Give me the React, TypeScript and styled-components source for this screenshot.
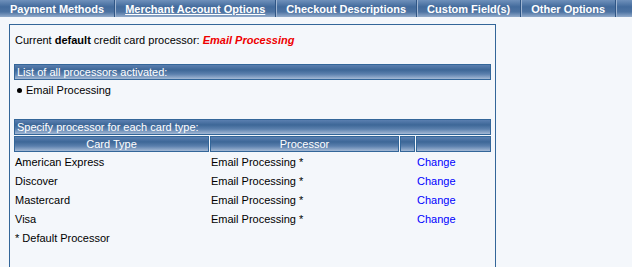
import React from "react";
import styled, { createGlobalStyle } from "styled-components";

const GlobalStyle = createGlobalStyle`
  html, body {
    margin: 0;
    padding: 0;
    background: #f4f7fb;
    font-family: "Liberation Sans", Arial, sans-serif;
    font-size: 11px;
    color: #000;
  }
`;

const barGradient = `linear-gradient(to bottom, #5a7fb0 0%, #3d6797 35%, #5b80ad 65%, #a4b9d5 100%)`;

const TabBar = styled.nav`
  display: flex;
  height: 17px;
  background: linear-gradient(to bottom, #6f90bb 0%, #436b9c 40%, #4d73a2 70%, #92abcb 100%);
`;

const Tab = styled.a<{ $active?: boolean }>`
  display: flex;
  align-items: center;
  padding: 0 10px;
  font-size: 11px;
  font-weight: bold;
  color: #fff;
  text-decoration: ${(p) => (p.$active ? "underline" : "none")};
  border-right: 1px solid #2f5585;
  box-shadow: 1px 0 0 #9fb5d2;
  white-space: nowrap;
  cursor: pointer;
`;

const Page = styled.main`
  padding: 7px 0 0 9px;
`;

const Box = styled.section`
  width: 477px;
  height: 260px;
  border: 1px solid #336699;
  padding: 0 4px;
`;

const Intro = styled.p`
  margin: 8px 0 0 1px;
  line-height: 14px;
`;

const Highlight = styled.span`
  color: #ee0000;
  font-weight: bold;
  font-style: italic;
`;

const SectionBar = styled.div<{ $top: number }>`
  margin-top: ${(p) => p.$top}px;
  height: 14px;
  line-height: 14px;
  border: 1px solid #336699;
  background: ${barGradient};
  color: #fff;
  padding-left: 2px;
`;

const BulletList = styled.ul`
  margin: 3px 0 0 0;
  padding: 0 0 0 12px;
  line-height: 14px;
  li {
    list-style: none;
    position: relative;
  }
  li::before {
    content: "";
    position: absolute;
    left: -9px;
    top: 5px;
    width: 5px;
    height: 5px;
    border-radius: 50%;
    background: #000;
  }
`;

const Grid = styled.div`
  display: grid;
  grid-template-columns: 195px 189px 15px 75px;
  column-gap: 1px;
  margin-top: 1px;
`;

const HeadCell = styled.div`
  box-sizing: border-box;
  height: 16px;
  line-height: 14px;
  border: 1px solid #336699;
  background: ${barGradient};
  color: #fff;
  text-align: center;
`;

const Cell = styled.div`
  height: 19px;
  line-height: 19px;
  padding-left: 1px;
  white-space: nowrap;
`;

const FirstRow = styled(Cell)`
  margin-top: 1px;
`;

const ChangeLink = styled.a`
  color: #0000ff;
  text-decoration: none;
  cursor: pointer;
`;

const Note = styled.div`
  line-height: 19px;
  padding-left: 1px;
`;

const tabs = [
  "Payment Methods",
  "Merchant Account Options",
  "Checkout Descriptions",
  "Custom Field(s)",
  "Other Options",
];

const cards = ["American Express", "Discover", "Mastercard", "Visa"];

export default function App() {
  return (
    <>
      <GlobalStyle />
      <TabBar>
        {tabs.map((t) => (
          <Tab key={t} $active={t === "Merchant Account Options"}>
            {t}
          </Tab>
        ))}
      </TabBar>
      <Page>
        <Box>
          <Intro>
            Current <b>default</b> credit card processor:{" "}
            <Highlight>Email Processing</Highlight>
          </Intro>
          <SectionBar $top={17}>List of all processors activated:</SectionBar>
          <BulletList>
            <li>Email Processing</li>
          </BulletList>
          <SectionBar $top={22}>Specify processor for each card type:</SectionBar>
          <Grid>
            <HeadCell>Card Type</HeadCell>
            <HeadCell>Processor</HeadCell>
            <HeadCell />
            <HeadCell />
            {cards.map((c, i) => {
              const Row = i === 0 ? FirstRow : Cell;
              return (
                <React.Fragment key={c}>
                  <Row>{c}</Row>
                  <Row>Email Processing *</Row>
                  <Row />
                  <Row>
                    <ChangeLink>Change</ChangeLink>
                  </Row>
                </React.Fragment>
              );
            })}
          </Grid>
          <Note>* Default Processor</Note>
        </Box>
      </Page>
    </>
  );
}
